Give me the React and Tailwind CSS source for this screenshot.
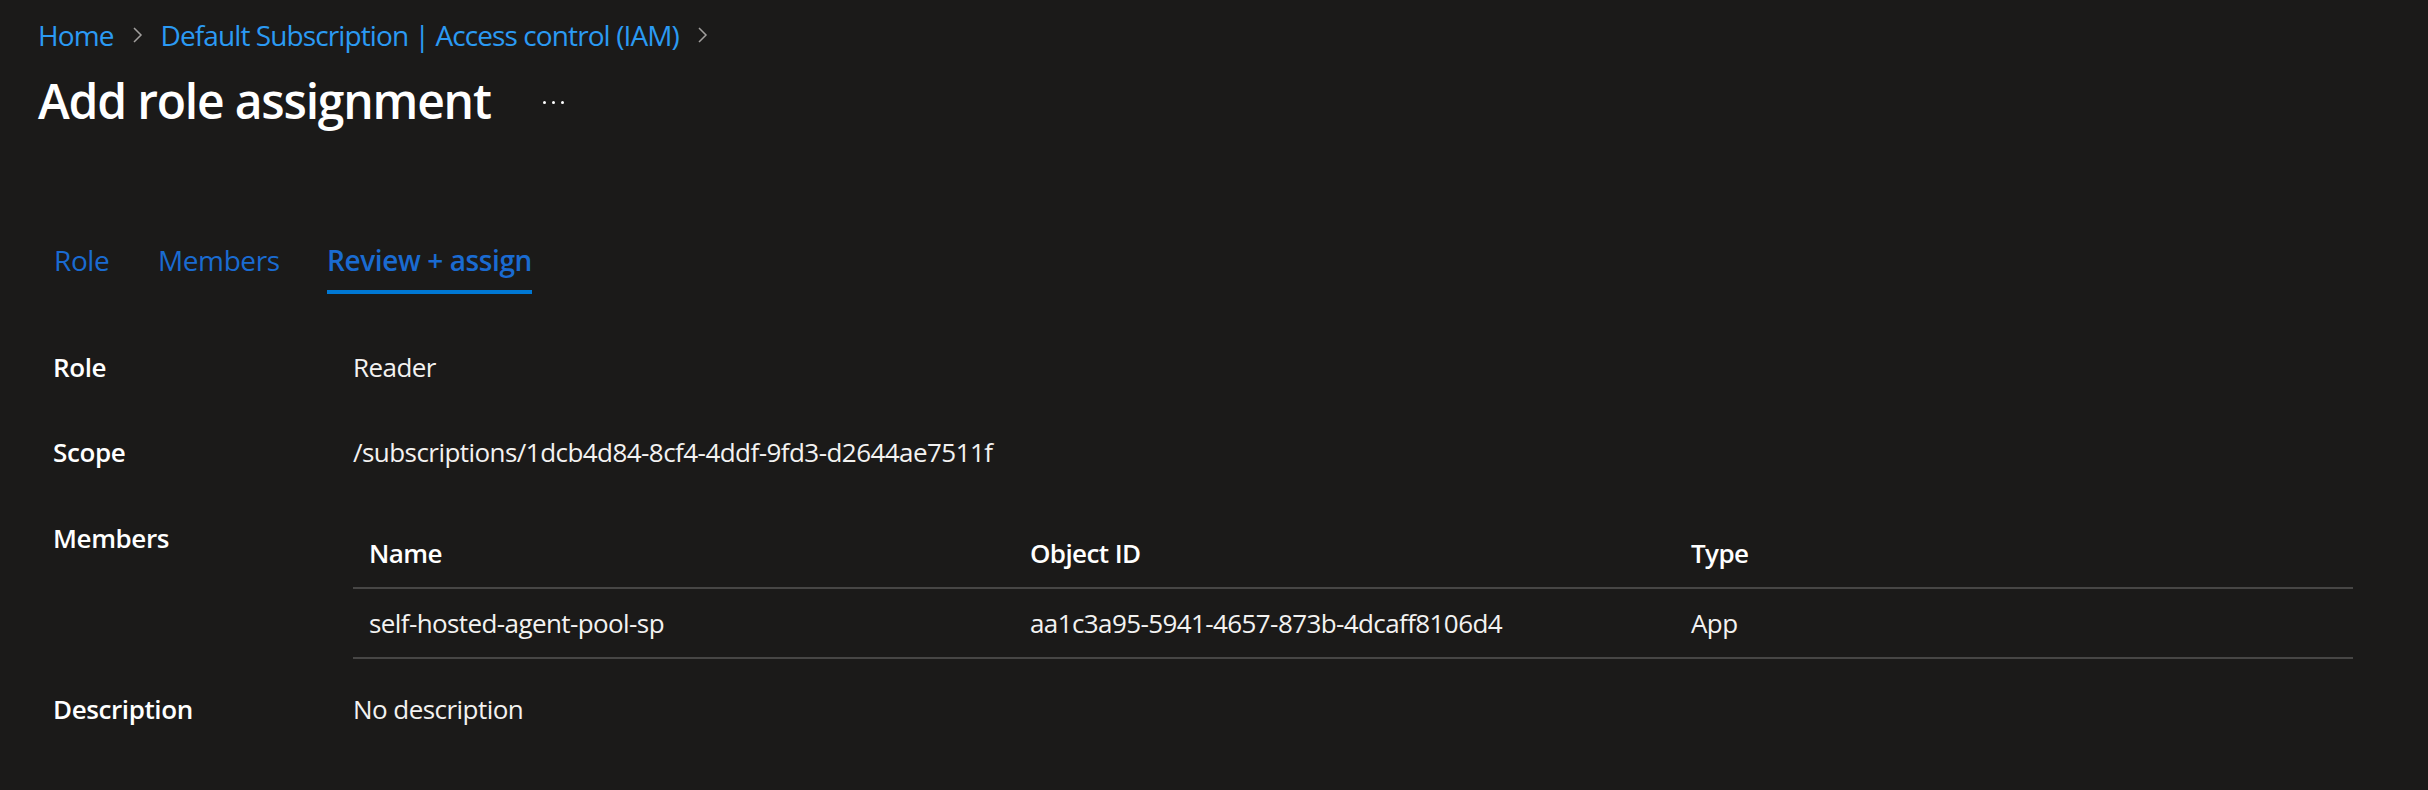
import React from "react";

const Chevron = () => (
  <svg width="11" height="16" viewBox="0 0 11 16" className="mx-[18px] shrink-0">
    <polyline points="2,1 9,8 2,15" fill="none" stroke="#a19f9d" strokeWidth="1.5" />
  </svg>
);

const Row = ({ label, children, className = "" }) => (
  <div className={"grid grid-cols-[300px_1fr] " + className}>
    <div className="text-[26px] leading-[36px] font-semibold tracking-[-0.4px] text-white">{label}</div>
    <div className="text-[26px] leading-[36px] tracking-[-0.55px] text-[#f3f2f1]">{children}</div>
  </div>
);

const members = [
  { name: "self-hosted-agent-pool-sp", id: "aa1c3a95-5941-4657-873b-4dcaff8106d4", type: "App" },
];

export default function App() {
  return (
    <div
      className="h-[790px] w-full overflow-hidden bg-[#1b1a19] pl-[38px] pt-[17px] text-white"
      style={{ fontFamily: '"Open Sans", "Noto Sans", sans-serif' }}
    >
      {/* Breadcrumb */}
      <nav className="flex items-center text-[28px] leading-[36px] tracking-[-0.9px] text-[#2b9af3]">
        <span>Home</span>
        <Chevron />
        <span>Default Subscription | Access control (IAM)</span>
        <Chevron />
      </nav>

      {/* Title */}
      <div className="mt-[18px] flex items-center">
        <h1 className="text-[48px] leading-[60px] font-semibold tracking-[-1.2px] text-white">Add role assignment</h1>
        <div className="ml-[52px] flex items-center gap-[6px] pt-[2px]">
          <span className="h-[3px] w-[3px] rounded-full bg-white"></span>
          <span className="h-[3px] w-[3px] rounded-full bg-white"></span>
          <span className="h-[3px] w-[3px] rounded-full bg-white"></span>
        </div>
      </div>

      {/* Tabs */}
      <div className="mt-[109px] flex pl-[16px] text-[28px] leading-[40px] tracking-[-0.4px] text-[#1a6bd1]">
        <div className="w-[104px]">Role</div>
        <div className="w-[169px]">Members</div>
        <div className="inline-flex flex-col items-stretch">
          <span className="font-semibold">Review + assign</span>
          <span className="mt-[10px] h-[4px] bg-[#0078d4]"></span>
        </div>
      </div>

      {/* Details */}
      <div className="mt-[55px] pl-[15px]">
        <Row label="Role">Reader</Row>
        <Row label="Scope" className="mt-[49px]">
          /subscriptions/1dcb4d84-8cf4-4ddf-9fd3-d2644ae7511f
        </Row>
        <div className="mt-[50px] grid grid-cols-[300px_1fr]">
          <div className="text-[26px] leading-[36px] font-semibold tracking-[-0.4px] text-white">Members</div>
          <div className="w-[2000px] -mt-px text-[26px] tracking-[-0.6px] text-[#f3f2f1]">
            <div className="grid h-[70px] grid-cols-[661px_661px_1fr] items-center border-b-2 border-[#474645] font-semibold text-white">
              <div className="pl-[16px]">Name</div>
              <div className="pl-[16px]">Object ID</div>
              <div className="pl-[16px]">Type</div>
            </div>
            {members.map((m) => (
              <div
                key={m.id}
                className="grid h-[70px] grid-cols-[661px_661px_1fr] items-center border-b-2 border-[#474645]"
              >
                <div className="pl-[16px]">{m.name}</div>
                <div className="pl-[16px]">{m.id}</div>
                <div className="pl-[16px]">{m.type}</div>
              </div>
            ))}
          </div>
        </div>
        <Row label="Description" className="mt-[32px]">
          No description
        </Row>
      </div>
    </div>
  );
}
